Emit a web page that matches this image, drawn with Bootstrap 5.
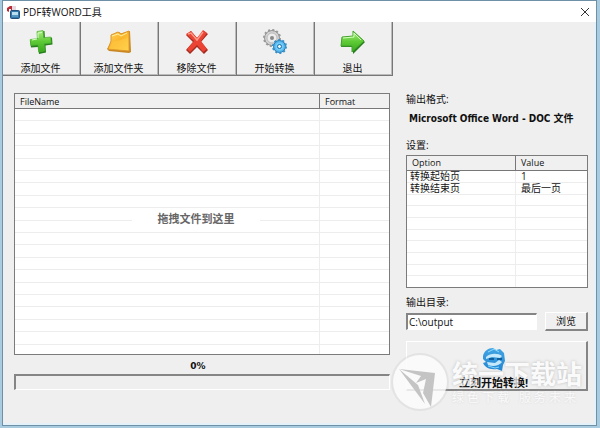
<!DOCTYPE html>
<html lang="zh-CN">
<head>
<meta charset="utf-8">
<meta name="viewport" content="width=device-width, initial-scale=1">
<title>PDF转WORD工具</title>
<link href="https://cdn.jsdelivr.net/npm/bootstrap@5.3.0/dist/css/bootstrap.min.css" rel="stylesheet">
<style>
body{background:#a9cbdf;font-family:"Open Sans","Noto Sans CJK SC",sans-serif;font-size:10px;line-height:12px;color:#111}
.app-window{background:#efefef;border:1px solid #6f91a8;margin:0 3px 2px 2px;min-height:calc(100vh - 2px);box-shadow:inset -2px -2px #e2f1fa}
.title-bar{height:21px;padding:0 6px 0 3px}
.title-bar h1{font-size:10px;line-height:18px;padding-left:3px}
.plain-btn{border:0;background:none;padding:0;line-height:0}
.tool-btn{width:78px;height:54px;padding:7px 2px 0 0;border:0;border-right:1px solid #777;border-bottom:1px solid #777;box-shadow:inset -1px -1px #bbb;background:#f0f0f0;gap:7px;color:#111}
.workspace{padding:17px 7px 0 11px;gap:16px}
.side-panel{width:183px;padding-right:1px}
.list-box{border:1px solid #7b7b7b;background:#fff;position:relative}
.grid-table{width:100%;table-layout:fixed;border-collapse:separate;border-spacing:0}
.grid-table th{height:15px;padding:1px 5px 0;background:#f0f0f0;border-bottom:1px solid #777;font-size:9px;font-weight:400;line-height:12px}
.grid-table th+th{border-left:1px solid #777}
.grid-table td{height:12px;padding:0 3px;border-bottom:1px solid #ededed;line-height:11px}
.grid-table td+td{border-left:1px solid #ededed;padding-left:5px}
.grid-table tr:last-child td{border-bottom:0}
.files tbody tr:nth-child(5n+2) td,.files tbody tr:nth-child(5n+4) td{height:13px}
.files tbody tr:last-child td{height:9px}
.options th{height:15px;padding-top:0}
.options tbody tr:nth-child(3n) td,.options tbody tr:last-child td{height:11px}
.drop-hint{position:absolute;left:117px;top:119px;width:128px;background:#fff;color:#666;font-weight:700;line-height:12px;font-size:11px}
.pct{font:bold 9px/12px "DejaVu Sans",sans-serif;margin-top:5px;padding-right:8px}
.bar-track{height:16px;border:2px solid #858585;border-right:1px solid #fff;border-bottom:1px solid #fff;border-radius:0;background:#efefef;margin-top:2px}
.fmt{font:bold 10px/14px "DejaVu Sans Condensed","Noto Sans CJK SC",sans-serif;margin:7px 0 13px 3px;white-space:nowrap}
.path-input{height:17px;min-width:0;border:1px solid #fff;border-top:2px solid #858585;border-left:2px solid #858585;background:#fff;font-size:10px;padding:0 1px;color:#111}
.raised{border:1px solid #fff;border-right:2px solid #858585;border-bottom:2px solid #858585;background:#f0f0f0;color:#111}
.browse{width:43px;height:19px;padding:0;line-height:14px}
.start-btn{height:50px;margin-top:10px;padding:5px 6px 0 0;font-size:11px;font-weight:700;line-height:14px;gap:3px}
.watermark{position:absolute;left:-17px;bottom:-22px;width:202px;pointer-events:none;gap:1px;color:#fff}
.wm-name{font-size:26px;line-height:30px;font-weight:700;text-shadow:0 0 3px #aaa;opacity:.72}
.wm-sub{font-size:12px;line-height:14px;text-shadow:0 0 2px #ccc;opacity:.7;margin-top:2px}
</style>
</head>
<body>
<svg class="position-absolute" width="0" height="0" aria-hidden="true"><defs>
<linearGradient id="green" x2="0" y2="1"><stop stop-color="#b0ed87"/><stop offset=".5" stop-color="#5ecb36"/><stop offset="1" stop-color="#38a91c"/></linearGradient>
<linearGradient id="gold" x2="1" y2="1"><stop stop-color="#ffd45e"/><stop offset=".5" stop-color="#fbb52b"/><stop offset="1" stop-color="#ffdf55"/></linearGradient>
<linearGradient id="blue" x2="0" y2="1"><stop stop-color="#42a4e3"/><stop offset="1" stop-color="#2386d3"/></linearGradient>
</defs></svg>
<div class="app-window d-flex flex-column">
<header class="title-bar bg-white d-flex align-items-center">
<svg width="14" height="14" viewBox="0 0 14 14" aria-hidden="true"><path d="M1 6V3l3-2h4v5H5V4H3v3z" fill="#b92b35"/><path d="M6 1h4v4H6z" fill="#e7d8df"/><rect x="4.500" y="5.500" width="9" height="8" rx="1" fill="#3277a9" stroke="#244f78"/><path d="M6 7h6v3H6z" fill="#b7ddef"/><path d="M6 11h6" stroke="#78b8d8"/></svg>
<h1 class="mb-0 fw-normal flex-grow-1">PDF转WORD工具</h1>
<button class="plain-btn" aria-label="关闭"><svg width="10" height="10" viewBox="0 0 10 10"><path d="M1 1l8 8M9 1L1 9" stroke="#333"/></svg></button>
</header>
<nav class="d-flex" aria-label="工具栏">
<button class="tool-btn d-flex flex-column align-items-center"><svg width="26" height="26" viewBox="0 0 26 26"><path d="M9.500 3l7-1 .5 7 7-.5.500 7-7 1 .5 7-7 1.500-1-7-7 .5-1-7 7-1z" fill="#26801b"/><path d="M9 2.500l6-1 .7 7.200 7-.7.5 6-7 .9.500 7-6 1-.8-7-7 .6-.7-6 7.200-.8z" fill="url(#green)" stroke="#4cad32" stroke-width=".7"/><path d="M10 9V4l4-.5M4 11l5-1" stroke="#d7ffc0" fill="none"/></svg>添加文件</button>
<button class="tool-btn d-flex flex-column align-items-center"><svg width="26" height="26" viewBox="0 0 26 26"><path d="M5 6l8-3 2 1.500L24 2l1 21-2 1L3 22 1 20l4-7z" fill="#c88622"/><path d="M5 6l7-3 3 2 8-3v20L2 20l3-8z" fill="url(#gold)" stroke="#dd982c"/><path d="M6 7l6-2 3 2 6-3" stroke="#fff0a0" fill="none"/><path d="M3 20l4-7 15-4v12z" fill="#ffc947" opacity=".6"/></svg>添加文件夹</button>
<button class="tool-btn d-flex flex-column align-items-center"><svg width="26" height="26" viewBox="0 0 26 26"><path d="M2 6l5-4 6 7 7-7 4 3-7 8 7 8-4 4-7-7-7 7-4-4 7-8z" fill="#a62b20"/><path d="M2 5l5-3 6 7 6-8 4 3-6 8 6 8-4 3-6-7-7 7-3-3 7-8z" fill="#eb4434"/><path d="M4 5l3-1 6 7 6-8" stroke="#ff9b86" stroke-width="1.500" fill="none"/></svg>移除文件</button>
<button class="tool-btn d-flex flex-column align-items-center"><svg width="26" height="26" viewBox="0 0 26 26"><circle cx="10" cy="9" r="7.500" fill="#d2d2d2" stroke="#959595"/><circle cx="10" cy="9" r="8" fill="none" stroke="#999" stroke-width="2" stroke-dasharray="2 2.190"/><circle cx="10" cy="9" r="5" fill="#ececec" stroke="#bbb"/><circle cx="10" cy="9" r="2" fill="#888"/><circle cx="17.500" cy="17.500" r="6" fill="#56b8ee" stroke="#2579b4"/><circle cx="17.500" cy="17.500" r="6.500" fill="none" stroke="#388fc5" stroke-width="2" stroke-dasharray="2 2.080"/><circle cx="17.500" cy="17.500" r="4" fill="#74cbf7"/><circle cx="17.500" cy="17.500" r="2" fill="#eaf8ff" stroke="#176da8"/></svg>开始转换</button>
<button class="tool-btn d-flex flex-column align-items-center"><svg width="26" height="26" viewBox="0 0 26 26"><path d="M2 9l11-1V2l12 11-12 12v-7H1z" fill="#267e1b"/><path d="M2 8l11-1V2l11 10-12 11v-6H1z" fill="url(#green)" stroke="#43a32e"/><path d="M3 9l11-1V4l7 7" stroke="#d2ffba" fill="none"/></svg>退出</button>
</nav>
<main class="workspace d-flex flex-grow-1">
<section class="flex-grow-1">
<div class="list-box files">
<table class="grid-table"><colgroup><col><col style="width:70px"></colgroup><thead><tr><th scope="col">FileName</th><th scope="col">Format</th></tr></thead><tbody id="file-rows"></tbody></table>
<div class="drop-hint text-center"><span>拖拽文件到这里</span></div>
</div>
<div class="pct text-center">0%</div>
<div class="bar-track progress" role="progressbar" aria-label="转换进度" aria-valuenow="0" aria-valuemin="0" aria-valuemax="100"><div class="progress-bar" style="width:0%"></div></div>
</section>
<aside class="side-panel flex-shrink-0">
<div>输出格式:</div>
<div class="fmt">Microsoft Office Word - DOC 文件</div>
<div class="mb-1">设置:</div>
<div class="list-box options">
<table class="grid-table"><colgroup><col><col style="width:72px"></colgroup><thead><tr><th scope="col">Option</th><th scope="col">Value</th></tr></thead><tbody id="option-rows"><tr><td>转换起始页</td><td>1</td></tr><tr><td>转换结束页</td><td>最后一页</td></tr></tbody></table>
</div>
<label for="outdir" class="d-block mt-2 mb-1">输出目录:</label>
<div class="d-flex align-items-center gap-2"><input id="outdir" class="path-input flex-grow-1" type="text" value="C:\output"><button class="raised browse flex-shrink-0">浏览</button></div>
<div class="position-relative">
<button class="raised start-btn w-100 d-flex flex-column align-items-center"><svg class="flex-shrink-0" width="26" height="26" viewBox="0 0 26 26"><path d="M2 9C3 4 7 1 12 1l3 2 4-1 4 4 1 8-2 4-1 6-5-2C8 23 4 20 2 16l3-1-3-3z" fill="url(#blue)"/><path d="M5 10c4-4 12-4 16-1l-2 2-8-1-6 2zM6 15l8 1 4-3 3 2c-3 4-9 5-14 3z" fill="#c5e8fa"/><path d="M7 5l6-3 5 3M7 19l7 2 4-1" stroke="#8ddafa" fill="none"/><path d="M8 12h5M16 12h5" stroke="#125e9d" stroke-width="2"/></svg><span>立刻开始转换!</span></button>
<div class="watermark d-flex align-items-center" aria-hidden="true">
<svg class="flex-shrink-0" width="62" height="62" viewBox="0 0 62 62"><circle cx="31" cy="31" r="29" fill="#aaa" opacity=".18"/><circle cx="31" cy="31" r="27" fill="#fff" opacity=".8"/><path d="M10 18l36 4-4 34L34 42l3-14-10 4 5-7z" fill="#c4c4c4"/><path d="M10 18l26 35-7-19z" fill="#c4c4c4"/></svg>
<div class="text-nowrap"><div class="wm-name">统一下载站</div><div class="wm-sub">绿 色 下 载 &nbsp; 服 务 未 来</div></div>
</div>
</div>
</aside>
</main>
</div>
<script>
function fillRows(id, total) {
  const body = document.getElementById(id);
  while (body.rows.length < total) {
    const row = body.insertRow();
    row.insertCell();
    row.insertCell();
  }
}
fillRows('file-rows', 20);
fillRows('option-rows', 10);
</script>
<script src="https://cdn.jsdelivr.net/npm/bootstrap@5.3.0/dist/js/bootstrap.bundle.min.js"></script>
</body>
</html>
